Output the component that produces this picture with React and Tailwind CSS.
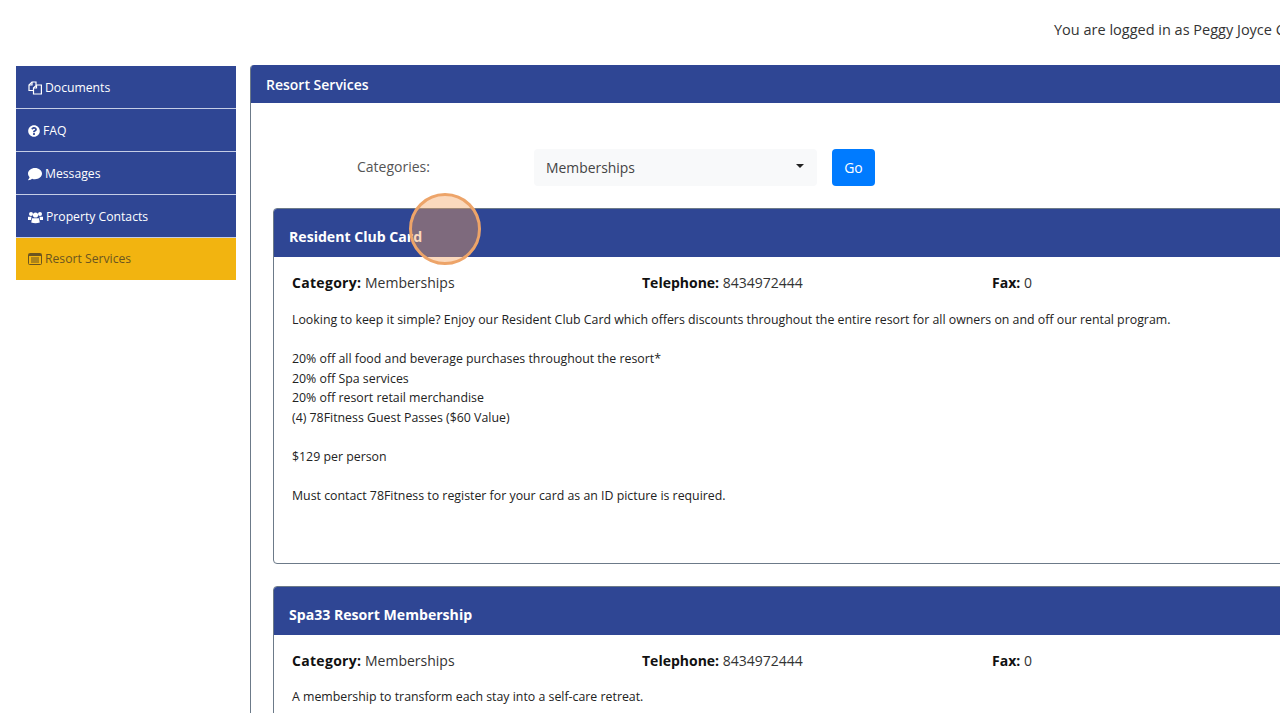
import { FaQuestionCircle, FaComment } from "react-icons/fa";

const FilesIcon = () => (
  <svg width="14" height="14" viewBox="0 0 14 14" fill="none" stroke="currentColor" strokeWidth="1.2">
    <path d="M5 9.5H1V4l3-3h4v3" />
    <path d="M4 1v3H1" />
    <path d="M5.5 13V7l3-3h4.900v9z" />
    <path d="M8.500 4v3h-3" />
  </svg>
);

const UsersIcon = () => (
  <svg width="15" height="13" viewBox="0 0 15 13" fill="currentColor">
    <circle cx="3" cy="3" r="2" />
    <circle cx="12" cy="3" r="2" />
    <circle cx="7.500" cy="4" r="2.600" />
    <path d="M0 5.800h3.500L3 9H0z" />
    <path d="M15 5.800h-3.500L12 9h3z" />
    <path d="M4 7.200h7l.8 4.300q-4.300 1.300-8.600 0z" />
  </svg>
);

const ListIcon = () => (
  <svg width="14" height="12" viewBox="0 0 14 12" fill="none" stroke="currentColor">
    <rect x="0.500" y="0.500" width="13" height="11" rx="1" />
    <path d="M1 2h12" strokeWidth="2" />
    <path d="M3 5h8M3 7h8M3 9h8" />
  </svg>
);

const navItems = [
  { label: "Documents", icon: <FilesIcon /> },
  { label: "FAQ", icon: <FaQuestionCircle className="text-[12px]" /> },
  { label: "Messages", icon: <FaComment className="text-[14px]" /> },
  { label: "Property Contacts", icon: <UsersIcon /> },
];

const Field = ({ label, value, className, labelClass = "" }) => (
  <div className={`text-[14px] text-[#333] ${className}`}>
    <b className={`font-bold text-[#111] ${labelClass}`}>{label}</b> {value}
  </div>
);

const ServiceCard = ({ title, className, children }) => (
  <div className={`w-[1100px] border border-[#6c7a89] rounded-[4px] overflow-hidden ${className}`}>
    <div className="h-[48px] bg-[#2f4694] text-white font-bold text-[14.1px] pl-[15px] pt-[18px] leading-[20px]">
      {title}
    </div>
    <div className="pl-[18px] pt-[16px]">
      <div className="flex leading-[20px]">
        <Field label="Category:" value="Memberships" labelClass="tracking-[0.3px]" className="w-[350px]" />
        <Field label="Telephone:" value="8434972444" className="w-[350px]" />
        <Field label="Fax:" value="0" />
      </div>
      <div className="mt-[16px] text-[12.35px] leading-[19.5px] text-[#222]">{children}</div>
    </div>
  </div>
);

export default function App() {
  return (
    <div className="relative h-[713px] w-[1280px] overflow-hidden bg-white font-['Open_Sans',sans-serif]">
      <div className="h-[65px] pt-[20px] pl-[1054px] whitespace-nowrap text-[14.5px] leading-[20px] text-[#333]">
        You are logged in as Peggy Joyce Ciaccio
      </div>

      <div className="flex items-start">
        {/* Sidebar */}
        <div className="ml-4 mt-px w-[220px] shrink-0 flex flex-col">
          {navItems.map(({ label, icon }) => (
            <div
              key={label}
              className="h-[43px] last:h-[42px] flex items-center gap-[3px] pl-3 pt-[2px] bg-[#2f4694] border-b border-[#c5cde6] text-white text-[12.2px]"
            >
              {icon}
              {label}
            </div>
          ))}
          <div className="h-[42px] flex items-center gap-[3px] pl-3 bg-[#f2b410] text-[#6b5520] text-[12.2px]">
            <ListIcon />
            Resort Services
          </div>
        </div>

        {/* Main panel */}
        <div className="ml-[14px] w-[1100px] shrink-0 h-[660px] border-l border-[#6c7a89] rounded-tl-[4px] overflow-hidden">
          <div className="h-[38px] bg-[#2f4694] text-white font-semibold text-[14px] leading-[20px] pl-[15px] pt-[10px]">
            Resort Services
          </div>

          <div className="flex items-center h-[37px] mt-[46px]">
            <div className="w-[105px] ml-[106px] pb-[3px] text-[14px] text-[#555]">Categories:</div>
            <div className="ml-[72px] w-[283px] h-[37px] bg-[#f8f9fa] rounded-[4px] flex items-center justify-between pl-3 pr-[12px] pt-px text-[13.9px] text-[#444]">
              Memberships
              <span className="w-0 h-0 border-x-[4px] border-x-transparent border-t-[4px] border-t-[#222] mb-[5px] mr-px" />
            </div>
            <div className="ml-[15px] w-[43px] h-[37px] bg-[#007bff] rounded-[4px] text-white text-[14px] flex items-center justify-center">
              Go
            </div>
          </div>

          <div className="ml-[22px] mt-[22px] flex flex-col gap-[22px]">
            <ServiceCard title="Resident Club Card" className="h-[356px]">
              <div className="pt-px">
                <p>Looking to keep it simple? Enjoy our Resident Club Card which offers discounts throughout the entire resort for all owners on and off our rental program.</p>
                <br />
                <p>20% off all food and beverage purchases throughout the resort*</p>
                <p>20% off Spa services</p>
                <p>20% off resort retail merchandise</p>
                <p>(4) 78Fitness Guest Passes ($60 Value)</p>
                <br />
                <p>$129 per person</p>
                <br />
                <p>Must contact 78Fitness to register for your card as an ID picture is required.</p>
              </div>
            </ServiceCard>
            <ServiceCard title="Spa33 Resort Membership" className="h-[300px]">
              <p>A membership to transform each stay into a self-care retreat.</p>
            </ServiceCard>
          </div>
        </div>
      </div>

      {/* Click highlight */}
      <div className="absolute left-[409px] top-[193px] w-[72px] h-[72px] rounded-full bg-[#f5a05a]/40 border-[3px] border-[#eda469]" />
    </div>
  );
}
